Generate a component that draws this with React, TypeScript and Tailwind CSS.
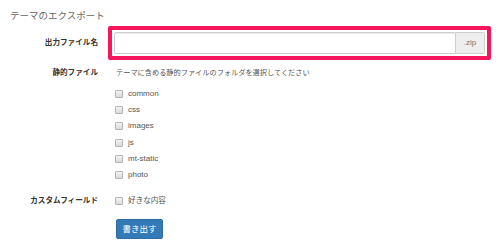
import React from 'react';

const folders = ['common', 'css', 'images', 'js', 'mt-static', 'photo'];

const Box = () => (
  <span className="w-[8px] h-[8px] shrink-0 border border-[#b5b5b5] rounded-[1px] bg-gradient-to-b from-[#f4f4f4] to-[#d9d9d9]" />
);

const Label = ({ children }: { children: React.ReactNode }) => (
  <div className="w-[98px] shrink-0 text-right font-bold text-[7.6px] text-[#333] leading-[12px]">
    {children}
  </div>
);

export default function App() {
  return (
    <div
      className="w-[500px] h-[251px] bg-white overflow-hidden"
      style={{ fontFamily: '"Liberation Sans", "Noto Sans CJK JP", sans-serif' }}
    >
      <h2 className="pl-[10px] pt-[10px] text-[9.5px] leading-[12px] text-[#666] font-normal">
        テーマのエクスポート
      </h2>

      <div className="mt-[4px] flex items-center">
        <Label>出力ファイル名</Label>
        <div className="ml-[10px] w-[383px] h-[34px] border-[4px] border-[#f7155c] rounded-[2px] p-[2px] flex">
          <div className="flex-1 h-[22px] border border-[#cfcfcf] rounded-l-[2px] bg-white shadow-[inset_0_1px_1px_rgba(0,0,0,0.08)]" />
          <div className="w-[29px] h-[22px] border border-l-0 border-[#cfcfcf] rounded-r-[2px] bg-[#eeeeee] flex items-center justify-center text-[8px] text-[#777]">
            .zip
          </div>
        </div>
      </div>

      <div className="mt-[7px] flex items-center">
        <Label>静的ファイル</Label>
        <div className="ml-[18px] text-[7.2px] leading-[12px] text-[#555]">
          テーマに含める静的ファイルのフォルダを選択してください
        </div>
      </div>

      <ul className="mt-[7px] pl-[115px] flex flex-col">
        {folders.map((f) => (
          <li key={f} className="h-[16.2px] flex items-center gap-[5px]">
            <Box />
            <span className="text-[8px] text-[#555] leading-[12px]">{f}</span>
          </li>
        ))}
      </ul>

      <div className="mt-[12px] flex items-center">
        <Label>カスタムフィールド</Label>
        <div className="ml-[17px] flex items-center gap-[5px]">
          <Box />
          <span className="text-[7.6px] text-[#555] leading-[12px]">好きな内容</span>
        </div>
      </div>

      <div className="mt-[8px] pl-[116px]">
        <button className="w-[47px] h-[20px] rounded-[2px] bg-[#337ab7] border border-[#2e6da4] text-white text-[8.5px] leading-none">
          書き出す
        </button>
      </div>
    </div>
  );
}
